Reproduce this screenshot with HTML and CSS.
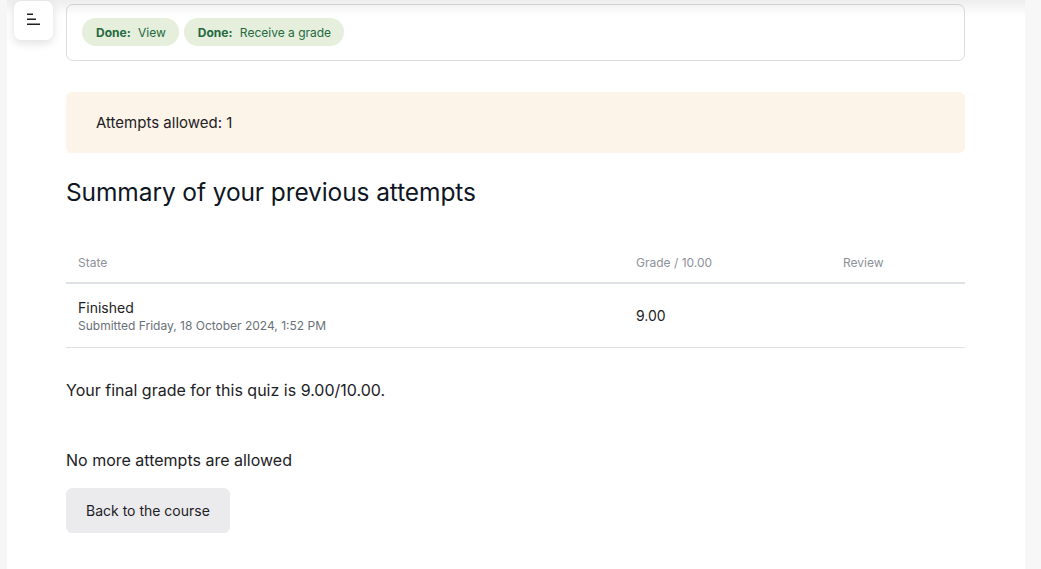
FILE: index.html
```html
<!DOCTYPE html>
<html lang="en">
<head>
<meta charset="utf-8">
<title>Quiz summary</title>
<link rel="stylesheet" href="styles.css">
</head>
<body>
<div class="layout">
  <div class="side-left"></div>
  <main class="main">
    <div class="topshade"></div>
    <button class="drawer-toggle" aria-label="Open course index">
      <svg width="14" height="12" viewBox="0 0 14 12" aria-hidden="true">
        <rect x="0" y="0.5" width="6" height="1.5" fill="#1d2125"/>
        <rect x="0" y="5.5" width="9" height="1.5" fill="#1d2125"/>
        <rect x="0" y="10.5" width="13" height="1.5" fill="#1d2125"/>
      </svg>
    </button>
    <div class="content">
      <div class="completion">
        <span class="chip"><strong>Done:</strong> View</span>
        <span class="chip"><strong>Done:</strong> Receive a grade</span>
      </div>
      <div class="alert">Attempts allowed: 1</div>
      <h2 class="heading">Summary of your previous attempts</h2>
      <table class="attempts">
        <thead>
          <tr>
            <th class="c-state">State</th>
            <th class="c-grade">Grade / 10.00</th>
            <th class="c-review">Review</th>
          </tr>
        </thead>
        <tbody>
          <tr>
            <td class="c-state">
              <div class="state">Finished</div>
              <div class="submitted">Submitted Friday, 18 October 2024, 1:52 PM</div>
            </td>
            <td class="c-grade">9.00</td>
            <td class="c-review"></td>
          </tr>
        </tbody>
      </table>
      <p class="final">Your final grade for this quiz is 9.00/10.00.</p>
      <p class="nomore">No more attempts are allowed</p>
      <button class="back">Back to the course</button>
    </div>
  </main>
  <div class="side-right"></div>
</div>
</body>
</html>
```

FILE: styles.css
```css
html, body {
  margin: 0;
  padding: 0;
  height: 100%;
}
body {
  font-family: Inter, "Noto Sans", "Liberation Sans", sans-serif;
  color: #1d2125;
  background: #ffffff;
  overflow: hidden;
}
.layout {
  display: flex;
  min-height: 569px;
}
.side-left {
  width: 7px;
  background: #f6f6f6;
  flex: none;
}
.side-right {
  width: 16px;
  background: #f7f7f7;
  flex: none;
}
.main {
  flex: 1;
  position: relative;
  background: #ffffff;
  padding: 4px 0 40px 59px;
}
.topshade {
  position: absolute;
  left: 0;
  right: 0;
  top: 0;
  height: 16px;
  background: linear-gradient(to bottom, rgba(0,0,0,0.07), rgba(0,0,0,0));
  pointer-events: none;
  z-index: 2;
}
.drawer-toggle {
  position: absolute;
  left: 7px;
  top: 1px;
  width: 39px;
  height: 39px;
  border: none;
  border-radius: 7px;
  background: #ffffff;
  box-shadow: 0 3px 10px rgba(0,0,0,0.13);
  display: flex;
  align-items: center;
  justify-content: center;
  padding: 0;
  z-index: 3;
}
.drawer-toggle svg {
  margin-left: 1px;
  margin-top: -3px;
}
.content {
  width: 899px;
}
.completion {
  border: 1px solid #dcdcdc;
  border-radius: 7px;
  padding: 13px 15px;
  display: flex;
  gap: 5px;
  height: 29px;
}
.chip {
  display: inline-flex;
  align-items: center;
  height: 28px;
  padding: 0 13px 0 14px;
  border-radius: 14px;
  background: #e5efdc;
  color: #24693f;
  font-size: 12px;
  white-space: pre;
}
.chip strong {
  font-weight: 700;
  margin-right: 4px;
}
.alert {
  margin-top: 31px;
  background: #fcf4e8;
  border-radius: 6px;
  height: 61px;
  display: flex;
  align-items: center;
  padding: 0 30px;
  font-size: 15px;
  color: #1d2125;
}
.heading {
  margin: 24px 0 0 0;
  font-size: 24.5px;
  font-weight: 400;
  line-height: 30px;
  color: #0f1623;
  letter-spacing: -0.1px;
}
.attempts {
  margin-top: 35px;
  width: 100%;
  border-collapse: collapse;
}
.attempts th {
  text-align: left;
  font-weight: 400;
  font-size: 12px;
  color: #8d9198;
  padding: 0 12px;
  height: 40px;
  border-bottom: 2px solid #dee2e6;
}
.attempts td {
  text-align: left;
  padding: 0 12px;
  height: 63px;
  border-bottom: 1px solid #dee2e6;
  vertical-align: middle;
}
.c-state { width: 534px; }
.c-grade { width: 183px; font-size: 14px; color: #1d2125; }
.state {
  font-size: 14px;
  line-height: 19px;
  color: #1d2125;
}
.submitted {
  font-size: 12px;
  line-height: 17px;
  color: #6a7078;
}
.final {
  margin: 30px 0 0 0;
  font-size: 16px;
  line-height: 24px;
}
.nomore {
  margin: 46px 0 0 0;
  font-size: 16px;
  line-height: 24px;
}
.back {
  margin-top: 16px;
  height: 45px;
  padding: 0 20px;
  border: none;
  border-radius: 6px;
  background: #ebebee;
  font-family: inherit;
  font-size: 14px;
  color: #1d2125;
}
```
